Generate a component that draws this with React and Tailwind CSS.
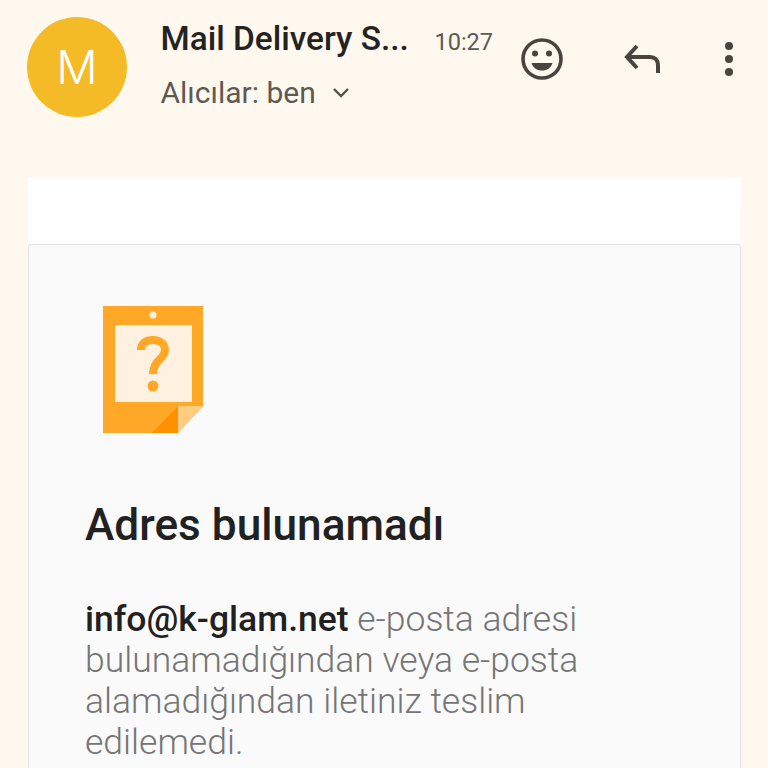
import React from "react";

const SmileIcon = () => (
  <svg width="44" height="44" viewBox="0 0 44 44" fill="none">
    <circle cx="22" cy="22" r="19" stroke="#48453e" strokeWidth="3.6" />
    <circle cx="15" cy="16.5" r="3" fill="#48453e" />
    <circle cx="29" cy="16.5" r="3" fill="#48453e" />
    <path d="M11.5 26 H32.5 C31 31 27 33.5 22 33.5 C17 33.5 13 31 11.5 26 Z" fill="#48453e" />
  </svg>
);

const ReplyIcon = () => (
  <svg width="40" height="32" viewBox="0 0 40 32" fill="none">
    <path d="M16 3 L6 14 L16 25 M6 14 H29 C34 14 37 17 37 22 V30" stroke="#48453e" strokeWidth="4" />
  </svg>
);

const MoreIcon = () => (
  <svg width="12" height="36" viewBox="0 0 12 36" fill="#48453e">
    <circle cx="6" cy="5" r="4" />
    <circle cx="6" cy="18" r="4" />
    <circle cx="6" cy="31" r="4" />
  </svg>
);

const Chevron = () => (
  <svg width="18" height="12" viewBox="0 0 18 12" fill="none">
    <path d="M2 2 L9 9 L16 2" stroke="#55524b" strokeWidth="2.4" />
  </svg>
);

// Orange note with the question mark
const NoteIcon = () => (
  <svg width="100" height="127" viewBox="0 0 100 127">
    <path d="M0 0 H100 V100 L75 127 H0 Z" fill="#ffa726" />
    <circle cx="50" cy="9" r="3.5" fill="#ffeedb" />
    <rect x="12" y="19" width="77" height="77" fill="#fff1e0" />
    <path d="M49 127 L75 100 V127 Z" fill="#ff9100" />
    <path d="M75 100 H100 L75 127 Z" fill="#ffcc80" />
    <path d="M38 44 C38 37 43 34 50 34 C57 34 62 38 62 44 C62 53 50 54 50 68" fill="none" stroke="#ffa726" strokeWidth="8" />
    <circle cx="50" cy="80" r="5.5" fill="#ffa726" />
  </svg>
);

const App = () => {
  return (
    <div className="w-[768px] h-[768px] overflow-hidden bg-[#fff8ef] font-['Roboto',sans-serif]">
      <div className="flex items-start h-[178px] pt-[17px] pl-[27px]">
        <div className="w-[100px] h-[100px] rounded-full bg-[#f5bb27] flex items-center justify-center text-white text-[46px] font-light font-['Inter',sans-serif] shrink-0">
          M
        </div>
        <div className="ml-[33.5px] w-[332.5px] pt-[2px]">
          <div className="flex items-baseline h-[40px]">
            <span className="w-[274.5px] text-[33.4px] leading-[40px] font-medium text-[#24231f] whitespace-nowrap">Mail Delivery S...</span>
            <span className="text-[23.5px] leading-[40px] text-[#5c5a53] whitespace-nowrap">10:27</span>
          </div>
          <div className="flex items-center mt-[14px] h-[40px]">
            <span className="text-[30px] leading-[40px] text-[#5c5a53] whitespace-nowrap">Alıcılar: ben</span>
            <span className="ml-[16px] flex"><Chevron /></span>
          </div>
        </div>
        <div className="flex items-center mt-[20px] ml-[27px]">
          <SmileIcon />
          <div className="ml-[57px] flex"><ReplyIcon /></div>
          <div className="ml-[62px] flex"><MoreIcon /></div>
        </div>
      </div>
      <div className="ml-[28px] w-[713px] h-[66px] bg-white" />
      <div className="ml-[28px] w-[713px] h-[560px] bg-[#fafafa] border border-[#e2e1df] rounded-t-[3px] pl-[56px] pt-[61px]">
        <div className="ml-[18px] flex"><NoteIcon /></div>
        <h1 className="mt-[67px] text-[44.2px] leading-[50px] font-medium text-[#212121] whitespace-nowrap">Adres bulunamadı</h1>
        <p className="mt-[49px] w-[560px] text-[35.5px] leading-[41px] font-light text-[#757575]">
          <span className="font-medium text-[#212121]">info@k-glam.net</span> e-posta adresi bulunamadığından veya e-posta alamadığından iletiniz teslim edilemedi.
        </p>
      </div>
    </div>
  );
};

export default App;
